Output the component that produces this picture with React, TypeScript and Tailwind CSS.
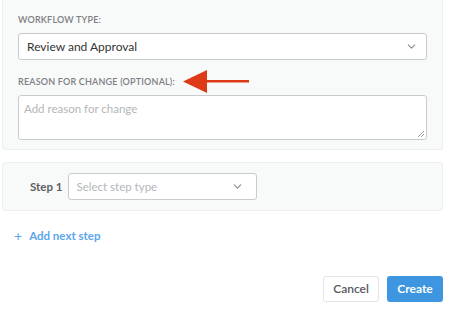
import { ChevronDown } from 'lucide-react';

function SelectBox({ value, placeholder, className }: { value?: string; placeholder?: string; className: string }) {
  return (
    <div className={`flex items-center justify-between bg-white border border-[#c9cccf] rounded-[3px] ${className}`}>
      <span className={value ? 'text-[#333]' : 'text-[#b3b6b9]'}>{value ?? placeholder}</span>
      <ChevronDown size={13} strokeWidth={2} className="text-[#8a8d90]" />
    </div>
  );
}

export default function App() {
  return (
    <div className="relative w-[449px] h-[312px] bg-white overflow-hidden" style={{ fontFamily: 'Lato, "Open Sans", sans-serif' }}>
      <div className="mx-[2px] w-[441px] bg-[#f8f9f9] border border-t-0 border-[#eceeef] rounded-b-[3px] pt-[14px] pb-[9px] pl-[15px] pr-[15px]">
        <div className="text-[9px] leading-[12px] tracking-[0.2px] text-[#7d8083] font-semibold">WORKFLOW TYPE:</div>
        <SelectBox value="Review and Approval" className="mt-[7px] h-[27px] pl-[8px] pr-[8px] text-[12px]" />
        <div className="mt-[16px] text-[9px] leading-[12px] tracking-[0.2px] text-[#7d8083] font-semibold">REASON FOR CHANGE (OPTIONAL):</div>
        <div className="relative mt-[7px] h-[45px] bg-white border border-[#c9cccf] rounded-[3px] px-[5px] pt-[4px] text-[11.5px] text-[#b3b6b9]">
          Add reason for change
          <svg className="absolute right-[1px] bottom-[1px]" width="8" height="8" viewBox="0 0 8 8">
            <path d="M7 1L1 7M7 4L4 7" stroke="#888" strokeWidth="0.8" />
          </svg>
        </div>
      </div>

      <div className="mx-[2px] mt-[12px] w-[441px] h-[49px] bg-[#f8f9f9] border border-[#eceeef] rounded-[3px] flex items-center pl-[27px]">
        <span className="text-[11.5px] font-bold text-[#5c5f62] mr-[6px]">Step 1</span>
        <SelectBox placeholder="Select step type" className="w-[189px] h-[27px] pl-[7px] pr-[12px] text-[11.5px]" />
      </div>

      <div className="mt-[16px] pl-[14px] flex items-center text-[11.5px] font-bold text-[#5ba6ea]">
        <span className="font-normal text-[14px] mr-[7px] leading-none">+</span>
        <span>Add next step</span>
      </div>

      <div className="mt-[32px] pr-[6px] flex justify-end gap-[8px]">
        <button className="w-[56px] h-[26px] bg-white border border-[#e3e5e7] rounded-[3px] text-[12px] font-semibold text-[#55585b]">Cancel</button>
        <button className="w-[56px] h-[26px] bg-[#3d96df] rounded-[3px] text-[12px] font-bold text-white">Create</button>
      </div>

      <svg className="absolute left-[183px] top-[70px]" width="67" height="23" viewBox="0 0 67 23">
        <polygon points="0,11.5 24,0 24,23" fill="#dd3a17" />
        <rect x="22" y="10" width="44" height="2.5" fill="#dd3a17" />
      </svg>
    </div>
  );
}
